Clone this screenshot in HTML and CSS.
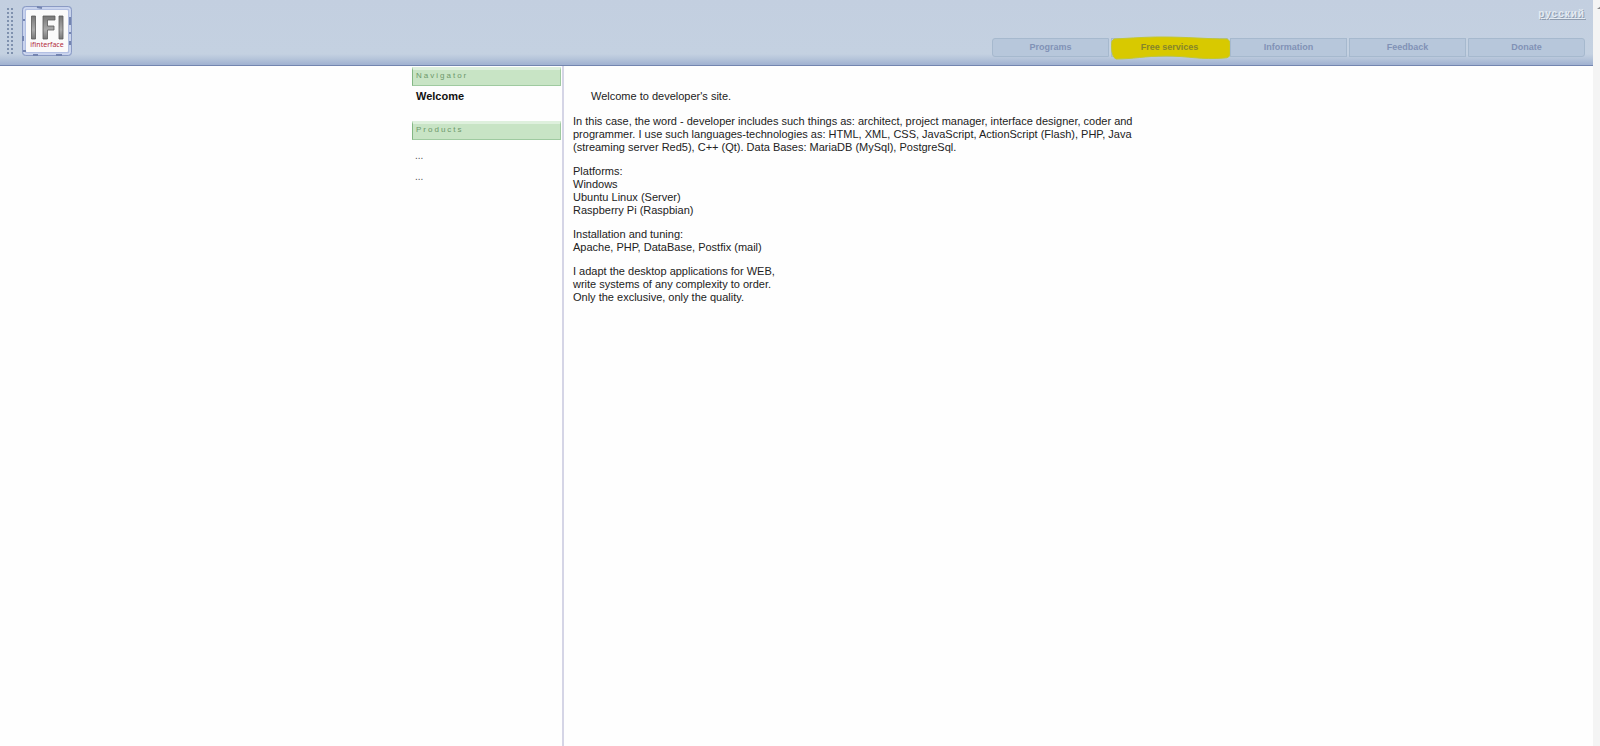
FILE: index.html
```html
<!DOCTYPE html>
<html lang="en">
<head>
<meta charset="utf-8">
<title>ifinterface</title>
<link rel="stylesheet" href="styles.css">
</head>
<body>
<div class="page">
  <header class="header">
    <div class="brand">
      <span class="grip"></span>
      <a class="logo" href="#" aria-label="ifinterface">
        <svg class="logo-frame" viewBox="0 0 50 50" aria-hidden="true">
          <defs>
            <linearGradient id="metal" x1="0" x2="0" y1="0" y2="1">
              <stop offset="0" stop-color="#777"/><stop offset=".6" stop-color="#aaa"/><stop offset="1" stop-color="#777"/>
            </linearGradient>
          </defs>
          <rect x=".5" y=".5" width="49" height="49" rx="3" fill="#b3c0e3" stroke="#8b9bc4"/>
          <rect x="2" y="2" width="46" height="46" rx="2" fill="none" stroke="#dde5f6"/>
          <path d="M1 14h2M1 30v5M1 45h3M15 1l5 1M48 11v8M47 27h2M48 35v4M11 49h5M34 49h6" stroke="#7384b0" stroke-width="2" fill="none"/>
          <rect x="4" y="4" width="42" height="42" rx="1" fill="#fafafa"/>
          <path d="M9.500 10h4v23h-4zM21 10h12v4h-7.500v6h6.500v4h-6.500v9h-4.500zM37 10h4v23h-4z" fill="url(#metal)" stroke="#5c5c5c" stroke-width=".8"/>
        </svg>
        <span class="logo-text">ifinterface</span>
      </a>
    </div>
    <div class="tools">
      <a class="language" href="#" lang="ru">русский</a>
      <nav class="menu">
        <a class="tab" href="#">Programs</a>
        <a class="tab marked" href="#">
          <svg class="marker" viewBox="0 0 120 24" preserveAspectRatio="none" aria-hidden="true">
            <path d="M3 3C22 2 35 1 50 1C78 1 96 3 116 3Q119 4 119 8V18Q119 22 113 22C91 24 77 20 55 20C34 20 22 23 5 23Q2 22 1 16Q0 9 1 5Z" fill="#d8c900" stroke="#c3c830" stroke-width="1"/>
          </svg>
          <span class="tab-label">Free services</span>
        </a>
        <a class="tab" href="#">Information</a>
        <a class="tab" href="#">Feedback</a>
        <a class="tab" href="#">Donate</a>
      </nav>
    </div>
  </header>
  <div class="content">
    <aside class="sidebar">
      <h2 class="section">Navigator</h2>
      <a class="current" href="#">Welcome</a>
      <h2 class="section">Products</h2>
      <a class="more" href="#">...</a>
      <a class="more" href="#">...</a>
    </aside>
    <main class="article">
      <p class="intro">Welcome to developer's site.</p>
      <p>In this case, the word - developer includes such things as: architect, project manager, interface designer, coder and<br>programmer. I use such languages-technologies as: HTML, XML, CSS, JavaScript, ActionScript (Flash), PHP, Java<br>(streaming server Red5), C++ (Qt). Data Bases: MariaDB (MySql), PostgreSql.</p>
      <p>Platforms:<br>Windows<br>Ubuntu Linux (Server)<br>Raspberry Pi (Raspbian)</p>
      <p>Installation and tuning:<br>Apache, PHP, DataBase, Postfix (mail)</p>
      <p>I adapt the desktop applications for WEB,<br>write systems of any complexity to order.<br>Only the exclusive, only the quality.</p>
    </main>
  </div>
</div>
<div class="scroll-track"><span class="scroll-up"></span></div>
</body>
</html>
```
FILE: styles.css
```css
* { box-sizing: border-box; }
body {
  margin: 0;
  min-height: 100vh;
  display: flex;
  background: #fefefe;
  color: #222;
  font-family: "Liberation Sans", Arial, sans-serif;
  font-size: 11px;
  line-height: 13px;
}
a { text-decoration: none; }
.page { flex: 1; display: flex; flex-direction: column; }
.header {
  display: flex;
  justify-content: space-between;
  min-height: 66px;
  border-bottom: 1px solid #7385af;
  background: linear-gradient(#c3cfe0, #c4d1e1 54px, #b5c4da 59px, #a3b4d2 64px);
}
.brand { display: flex; gap: 9px; padding: 6px; align-items: flex-start; }
.grip {
  width: 7px;
  height: 48px;
  margin-top: 1px;
  background: radial-gradient(circle at 2px 2px, #7f91ae 1px, transparent 1px) 0 0 / 4px 4px;
}
.logo { position: relative; width: 50px; height: 50px; }
.logo-frame { display: block; width: 100%; height: 100%; }
.logo-text {
  position: absolute;
  inset: auto 0 7px;
  text-align: center;
  color: #b22b3b;
  font-family: "Noto Sans", sans-serif;
  font-size: 7px;
  line-height: 8px;
}
.tools {
  display: flex;
  flex-direction: column;
  justify-content: space-between;
  align-items: flex-end;
  padding: 7px 8px 8px 0;
}
.language {
  color: #e4ebf2;
  font-size: 10px;
  font-weight: bold;
  letter-spacing: 1px;
  text-decoration: underline;
  text-shadow: 1px 1px 0 #8f9db0;
}
.menu { display: flex; gap: 2px; }
.tab {
  position: relative;
  width: 117px;
  padding: 2px 0;
  border: 1px solid #a6b9ce;
  background: #b7c7db;
  color: #8192b6;
  font-size: 9px;
  font-weight: bold;
  text-align: center;
}
.tab:first-child { border-radius: 3px 0 0 3px; }
.tab:last-child { border-radius: 0 3px 3px 0; }
.marker {
  position: absolute;
  inset: -3px -1px;
  width: 120px;
  height: 24px;
}
.tab-label { position: relative; color: #85852b; }
.content {
  flex: 1;
  display: flex;
  width: 100%;
  max-width: 769px;
  margin: 0 auto;
}
.sidebar {
  width: 152px;
  padding: 1px 1px 0 0;
  border-right: 2px solid #d5d5e6;
}
.section {
  margin: 0;
  min-height: 19px;
  padding: 1px 3px;
  border: 1px solid #9fcaa0;
  border-top: 3px solid #def0dd;
  border-left-color: #83b784;
  background: #c8e4c5;
  color: #6d986b;
  font-size: 8px;
  font-weight: normal;
  letter-spacing: 2px;
  line-height: 10px;
}
.current {
  display: block;
  padding: 4px 4px 18px;
  color: #111;
  font-weight: bold;
}
.more { display: block; padding: 0 3px; margin-top: 8px; color: #555; font-size: 10px; }
.section + .more { margin-top: 9px; }
.article { flex: 1; padding: 24px 0 0 9px; }
.article p { margin: 0 0 11px; }
.article .intro { padding-left: 18px; margin-bottom: 12px; }
.scroll-track { width: 7px; background: #f4f4f4; overflow: hidden; }
.scroll-up {
  display: block;
  width: 8px;
  margin: 6px 0 0 4px;
  border: 4px solid transparent;
  border-top: 0;
  border-bottom: 3px solid #888;
}
```
